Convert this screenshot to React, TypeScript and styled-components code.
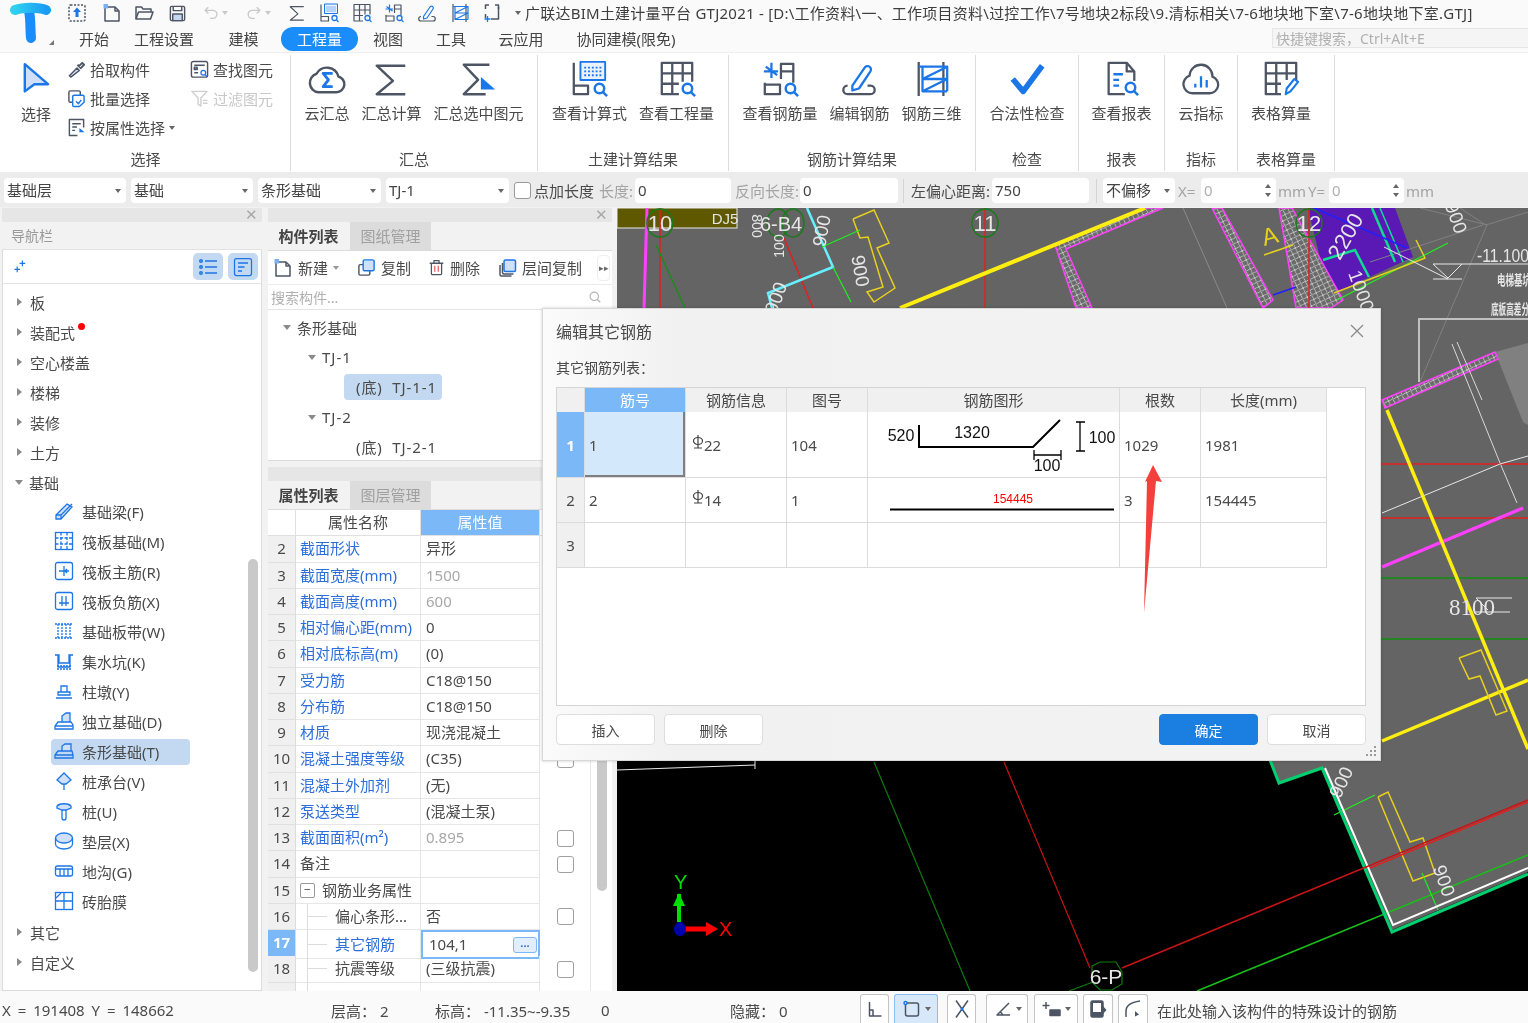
import React from "react";
import styled, { createGlobalStyle } from "styled-components";

const BLUE = "#1b76e8";
const DARK = "#4d5564";
const FONT = `"Noto Sans", "Noto Sans CJK SC", "Liberation Sans", sans-serif`;

const Global = createGlobalStyle`
  html, body { margin: 0; padding: 0; background: #f2f2f2; }
  body { font-family: ${FONT}; color: #4a4a4a; font-size: 15px; overflow: hidden; }
  * { box-sizing: border-box; }
`;

const Page = styled.div`
  position: relative;
  width: 1528px;
  height: 1023px;
  display: flex;
  flex-direction: column;
  overflow: hidden;
  background: #f2f2f2;
  filter: blur(0.4px);
`;

/* ---------- icons ---------- */

const Svg = styled.svg<{ $s: number }>`
  width: ${(p) => p.$s}px;
  height: ${(p) => p.$s}px;
  flex: none;
  display: block;
`;

const lens = (x = 30, y = 30, r = 5) => (
  <g stroke={BLUE} strokeWidth="2.6">
    <circle cx={x} cy={y} r={r} />
    <path d={`M${x + r - 1} ${y + r - 1}l4 4`} />
  </g>
);

const BIG: Record<string, React.ReactNode> = {
  upload: (
    <>
      <rect x="4" y="4" width="32" height="32" rx="3" strokeDasharray="4 3" />
      <path d="M20 9l8 9h-5v10h-6V18h-5z" fill={BLUE} stroke="none" />
    </>
  ),
  fileNew: (
    <>
      <path d="M8 8h18l8 8v20H6V10" />
      <path d="M26 8v8h8" />
      <rect x="3" y="2" width="9" height="9" fill="#7ab0f5" stroke="none" />
    </>
  ),
  open: (
    <>
      <path d="M4 32V8h11l3 4h16v6" />
      <path d="M4 32l5-14h29l-5 14z" />
    </>
  ),
  save: (
    <>
      <path d="M5 8a3 3 0 0 1 3-3h24a3 3 0 0 1 3 3v24a3 3 0 0 1-3 3H8a3 3 0 0 1-3-3z" />
      <path d="M11 5v9h18V5" />
      <rect x="10" y="21" width="20" height="14" fill="#c6d8f2" stroke={DARK} />
    </>
  ),
  undo: (
    <g stroke="#c9c9c9">
      <path d="M8 14h16a9 9 0 0 1 0 18h-6" />
      <path d="M14 7l-7 7 7 7" />
    </g>
  ),
  redo: (
    <g stroke="#c9c9c9">
      <path d="M32 14H16a9 9 0 0 0 0 18h6" />
      <path d="M26 7l7 7-7 7" />
    </g>
  ),
  select: <path d="M6 4l29 25H18L6 38z" fill="#cfe0f8" stroke={BLUE} strokeWidth="3" />,
  cloudSigma: (
    <>
      <path d="M11 34h19a8.5 8.5 0 0 0 2-16.7A12.5 12.5 0 0 0 9 14.5 10 10 0 0 0 11 34z" strokeWidth="2.6" />
      <path d="M26 14h-10l5.5 7-5.5 7h10" stroke={BLUE} strokeWidth="3" />
    </>
  ),
  sigma: <path d="M35 6H5l17 16L5 36h30" strokeWidth="2.6" />,
  sigmaSel: (
    <>
      <path d="M31 5H4l15 16L4 36h23" strokeWidth="2.6" />
      <path d="M22 18l15 13H22z" fill={BLUE} stroke="none" />
    </>
  ),
  calc: (
    <>
      <path d="M4 3v33h15v-9H4" strokeWidth="2.4" />
      <rect x="11" y="2" width="26" height="19" fill="#eaf2fd" stroke={BLUE} strokeWidth="2" />
      <path d="M15 8h18M15 12h18M15 16h18" stroke={BLUE} strokeWidth="2" strokeDasharray="2 2" />
      {lens(31, 30, 5)}
    </>
  ),
  gridQ: (
    <>
      <path d="M22 36H4V3h32v20M4 14h32M4 25h18M15 3v33M26 3v20" strokeWidth="2.4" />
      {lens(31, 30, 5)}
    </>
  ),
  rebarQ: (
    <>
      <path d="M21 20V4h13v20M21 12h13" strokeWidth="2.4" />
      <path d="M3 12h15M11 3v16M5 7l12 9" stroke={BLUE} strokeWidth="2.4" />
      <path d="M4 24v12h16V26H4" strokeWidth="2.4" />
      {lens(31, 30, 5)}
    </>
  ),
  editBar: (
    <>
      <path d="M8 27c-6 0-6 9 0 9h24c6 0 6-9 0-9h-3" strokeWidth="2.4" />
      <path d="M13 27l13-19a3 3 0 0 1 6 4L20 30l-7 2z" stroke={BLUE} strokeWidth="2.4" />
    </>
  ),
  rebar3d: (
    <>
      <path d="M6 2v36M32 2v36" strokeWidth="2.4" />
      <path d="M6 7h30L10 20h26L10 33h26M10 7v26M36 7v26" stroke={BLUE} strokeWidth="2.4" />
    </>
  ),
  boxPlus: (
    <>
      <path d="M14 4H7v8M26 4h7v8M7 22v8" />
      <path d="M33 8v24H18" />
      <path d="M11 26v12M5 32h12" stroke={BLUE} strokeWidth="2.6" />
    </>
  ),
  check: <path d="M5 20l11 13L36 6" stroke={BLUE} strokeWidth="6" />,
  report: (
    <>
      <path d="M24 36H7V3h19l8 9v10" strokeWidth="2.4" />
      <path d="M26 3v9h8" strokeWidth="2.4" />
      <path d="M12 15h10M12 21h6M12 27h6" stroke={BLUE} strokeWidth="2.4" />
      {lens(30, 29, 5)}
    </>
  ),
  cloudIdx: (
    <>
      <path d="M11 35h18a9 9 0 0 0 3-17.5 12 12 0 0 0-24-1A9.5 9.5 0 0 0 11 35z" strokeWidth="2.4" />
      <path d="M14 25v4M20 17v12M26 21v8" stroke={BLUE} strokeWidth="2.4" />
    </>
  ),
  gridPen: (
    <>
      <path d="M20 36H4V3h32v18M4 14h32M4 25h16M15 3v33M26 3v18" strokeWidth="2.4" />
      <path d="M25 36l1-6 8-10 4 3-8 10z" stroke={BLUE} strokeWidth="2.2" />
    </>
  ),
  pick: (
    <>
      <path d="M8 36l-3-3 16-16 5 5z" fill="#cfe0f8" />
      <path d="M22 10l8 8M24 14l8-8 4 4-8 8" strokeWidth="4" />
    </>
  ),
  batch: (
    <>
      <rect x="4" y="4" width="24" height="24" rx="3" />
      <path d="M15 13h18a3 3 0 0 1 3 3v12l-10 9H15a3 3 0 0 1-3-3V16a3 3 0 0 1 3-3z" fill="#fff" stroke={BLUE} />
      <path d="M19 26l5 5 6-8" stroke={BLUE} />
    </>
  ),
  byProp: (
    <>
      <path d="M22 37H5V3h30v17" />
      <path d="M11 12h18M11 19h10M11 26h6" />
      <path d="M26 21l11 9H26z" fill={BLUE} stroke="none" />
    </>
  ),
  find: (
    <>
      <rect x="3" y="3" width="34" height="33" rx="4" />
      <path d="M9 11h22M9 19h8M9 27h8" />
      <rect x="9" y="15" width="6" height="5" />
      {lens(28, 27, 5)}
    </>
  ),
  filter: (
    <g stroke="#cfcfcf">
      <path d="M4 5h32L23 19v17l-6-4V19z" />
      <path d="M27 24h10M27 30h10" />
    </g>
  ),
  copy: (
    <>
      <path d="M13 14H7a3 3 0 0 0-3 3v16a3 3 0 0 0 3 3h17a3 3 0 0 0 3-3v-6" />
      <rect x="13" y="4" width="23" height="23" rx="3" fill="#cfe0f8" stroke={BLUE} />
    </>
  ),
  layerCopy: (
    <>
      <path d="M6 14v19a3 3 0 0 0 3 3h20M11 10v19a3 3 0 0 0 3 3h19" />
      <rect x="14" y="4" width="23" height="23" rx="3" fill="#cfe0f8" stroke={BLUE} />
    </>
  ),
  trash: (
    <>
      <path d="M8 11v23a3 3 0 0 0 3 3h18a3 3 0 0 0 3-3V11M4 10h32M14 10V4h12v6" />
      <path d="M16 16v14M24 16v14" stroke="#e23b3b" strokeWidth="2.4" />
    </>
  ),
  sparkle: (
    <g stroke={BLUE}>
      <path d="M26 4v14M19 11h14M13 19v14M6 26h14" strokeWidth="3" />
    </g>
  ),
  listA: (
    <g stroke={BLUE}>
      <circle cx="6" cy="8" r="2.5" />
      <circle cx="6" cy="20" r="2.5" />
      <circle cx="6" cy="32" r="2.5" />
      <path d="M14 8h24M14 20h24M14 32h24" />
    </g>
  ),
  listB: (
    <g stroke={BLUE}>
      <rect x="3" y="3" width="34" height="34" rx="4" strokeWidth="2.5" />
      <path d="M10 12h20M10 20h13M10 28h8" />
    </g>
  ),
  search: (
    <g stroke="#b4b4b4" strokeWidth="3.5">
      <circle cx="18" cy="18" r="12" />
      <path d="M27 27l8 8" />
    </g>
  ),
  ortho: <path d="M9 6v28h24M9 34V22h7v12" />,
  rectSnap: (
    <>
      <rect x="7" y="8" width="26" height="26" rx="4" />
      <circle cx="7" cy="8" r="3" fill="#fff" stroke={BLUE} />
    </>
  ),
  cross: (
    <>
      <path d="M8 3l24 34M32 3L8 37" />
      <circle cx="20" cy="20" r="3" fill={BLUE} stroke="none" />
    </>
  ),
  angle: <path d="M32 8L8 32h26M14 25l6 7" />,
  plusBar: (
    <>
      <path d="M8 6v14M1 13h14" />
      <rect x="16" y="22" width="20" height="11" fill={DARK} />
    </>
  ),
  device: (
    <>
      <rect x="6" y="4" width="24" height="32" rx="3" fill={DARK} />
      <rect x="10" y="8" width="16" height="18" fill="#fff" stroke="none" />
      <path d="M30 14l7 8-7 8z" fill={DARK} stroke="none" />
    </>
  ),
  curve: (
    <>
      <path d="M6 36V24C6 14 14 7 34 4" />
      <path d="M24 24l8 7-8 4z" fill={DARK} stroke="none" />
    </>
  ),
};

const NAV: Record<string, React.ReactNode> = {
  beam: (
    <>
      <path d="M2 14l11-11 5 3-11 12H2z" fill="#cfe0f8" />
      <path d="M2 14h5v4M7 14L18 3" />
    </>
  ),
  raft: (
    <>
      <rect x="1.5" y="1.5" width="17" height="17" />
      <path d="M1.5 7h17M1.5 13h17M7 1.5v17M13 1.5v17" strokeDasharray="3 1.5" />
    </>
  ),
  main: (
    <>
      <rect x="1.5" y="1.5" width="17" height="17" rx="2" />
      <path d="M5 10h10M10 5v10M13 8l-2 2 2 2" />
    </>
  ),
  neg: (
    <>
      <rect x="1.5" y="1.5" width="17" height="17" rx="2" />
      <path d="M8 5v10M12 5v10M5 12h10" />
    </>
  ),
  band: <path d="M1 3h18M1 17h18M4 3v14M8 3v14M12 3v14M16 3v14" strokeDasharray="2 1" />,
  pit: (
    <>
      <path d="M1 4h4v8h10V4h4M4 4v12h12V4" />
      <path d="M3 15h14M3 18h14" strokeDasharray="2 1" />
    </>
  ),
  pier: <path d="M7 11V5h6v6M4 11h12v3H4zM2 17h16" />,
  indep: (
    <>
      <path d="M8 11V5l4-3h4v9" fill="#cfe0f8" />
      <path d="M4 11h13l2 3v4H1v-3zM1 15h18" />
    </>
  ),
  strip: (
    <>
      <path d="M8 10V5l3-2h6v7" fill="#cfe0f8" />
      <path d="M4 10h14l1 4v3H1v-3zM1 14h18" />
    </>
  ),
  cap: (
    <>
      <path d="M10 2l7 7-5 4h-4L3 9z" fill="#cfe0f8" />
      <path d="M10 13v6" />
    </>
  ),
  pile: (
    <>
      <path d="M3 5c3-3 11-3 14 0v2l-5 2H8L3 7z" fill="#cfe0f8" />
      <path d="M8 9v8a2 2 0 0 0 4 0V9" />
    </>
  ),
  cushion: (
    <>
      <ellipse cx="10" cy="7" rx="8.5" ry="5" fill="#cfe0f8" />
      <path d="M1.5 7v6c0 3 4 5 8.5 5s8.5-2 8.5-5V7" />
    </>
  ),
  ditch: (
    <>
      <rect x="1.5" y="5" width="17" height="10" rx="2" />
      <path d="M2 8h16M6 8v7M10 8v7M14 8v7" />
    </>
  ),
  brick: (
    <>
      <rect x="1.5" y="1.5" width="17" height="17" />
      <path d="M10 1.5v17M1.5 10h17M2 7l5-5" />
    </>
  ),
};

const Icon = ({ n, s = 38 }: { n: string; s?: number }) => (
  <Svg $s={s} viewBox="0 0 40 40" fill="none" stroke={DARK} strokeWidth={s < 26 ? 3 : 2.2} strokeLinejoin="round">
    {BIG[n]}
  </Svg>
);

const NavIcon = ({ n }: { n: string }) => (
  <Svg $s={20} viewBox="0 0 20 20" fill="none" stroke={BLUE} strokeWidth={1.3}>
    {NAV[n]}
  </Svg>
);

/* ---------- title + tabs ---------- */

const TopBar = styled.header`
  height: 52px;
  flex: none;
  display: flex;
  background: #fafafa;
`;

const LogoBox = styled.div`
  position: relative;
  width: 66px;
  padding: 2px 0 0 9px;
`;

const Corner = styled.span`
  position: absolute;
  left: 49px;
  top: 40px;
  border-left: 5px solid transparent;
  border-bottom: 5px solid #777;
`;

const TopRows = styled.div`
  flex: 1;
  min-width: 0;
  display: flex;
  flex-direction: column;
`;

const QuickRow = styled.div`
  height: 26px;
  display: flex;
  align-items: center;
  padding-left: 1px;
`;

const QuickBtn = styled.span<{ $w: number }>`
  width: ${(p) => p.$w}px;
  display: flex;
  align-items: center;
  gap: 2px;
  flex: none;
`;

const TinyCaret = styled.i<{ $c?: string }>`
  display: inline-block;
  flex: none;
  border-left: 3px solid transparent;
  border-right: 3px solid transparent;
  border-top: 4px solid ${(p) => p.$c ?? "#666"};
`;

const Title = styled.div`
  margin-left: 4px;
  font-size: 15px;
  line-height: 26px;
  white-space: nowrap;
  color: #3e3e3e;
  letter-spacing: 0.24px;
`;

const TabRow = styled.nav`
  height: 26px;
  display: flex;
  align-items: center;
`;

const Tab = styled.span<{ $w: number; $on?: boolean }>`
  width: ${(p) => p.$w}px;
  height: 24px;
  flex: none;
  text-align: center;
  line-height: 24px;
  font-size: 15px;
  border-radius: 12px;
  color: ${(p) => (p.$on ? "#fff" : "#444")};
  background: ${(p) => (p.$on ? "#1a8dfa" : "transparent")};
`;

const ShortcutBox = styled.div`
  margin: 0 0 2px auto;
  width: 256px;
  height: 20px;
  padding-left: 3px;
  font-size: 14px;
  line-height: 19px;
  color: #b0b0b0;
  background: #f5f5f5;
  border: 1px solid #e6e6e6;
  border-right: none;
`;

/* ---------- ribbon ---------- */

const Ribbon = styled.section`
  height: 120px;
  flex: none;
  display: flex;
  padding: 2px 0 0 1px;
  background: #fff;
  border-top: 1px solid #efefef;
`;

const Group = styled.div<{ $w: number }>`
  width: ${(p) => p.$w}px;
  height: 116px;
  flex: none;
  display: flex;
  flex-direction: column;
  border-right: 1px solid #dcdcdc;
`;

const GroupBody = styled.div<{ $pr?: number }>`
  flex: 1;
  display: flex;
  justify-content: center;
  gap: 12px;
  padding: 5px ${(p) => p.$pr ?? 0}px 0 0;
`;

const GroupLabel = styled.div`
  height: 22px;
  text-align: center;
  line-height: 20px;
  font-size: 15px;
`;

const Tool = styled.div`
  display: flex;
  flex-direction: column;
  align-items: center;
  gap: 5px;
  line-height: 20px;
  font-size: 15px;
  white-space: nowrap;
`;

const SelectBody = styled(GroupBody)`
  justify-content: flex-start;
  padding: 0 0 0 19px;
  gap: 0;
`;

const SelectTool = styled(Tool)`
  padding-top: 6px;
  gap: 11px;
`;

const SmallCol = styled.div<{ $w: number; $ml?: number }>`
  width: ${(p) => p.$w}px;
  margin-left: ${(p) => p.$ml ?? 0}px;
  display: flex;
  flex-direction: column;
`;

const SmallTool = styled.div<{ $off?: boolean }>`
  height: 29px;
  display: flex;
  align-items: center;
  gap: 4px;
  font-size: 15px;
  white-space: nowrap;
  color: ${(p) => (p.$off ? "#c8c8c8" : "#4a4a4a")};
`;

/* ---------- options bar ---------- */

const Options = styled.section`
  height: 35px;
  flex: none;
  display: flex;
  align-items: center;
  padding: 2px 0 0 4px;
  background: #ececec;
  font-size: 15px;
`;

const Field = styled.div<{ $w: number; $ml?: number }>`
  width: ${(p) => p.$w}px;
  margin-left: ${(p) => p.$ml ?? 0}px;
  height: 25px;
  flex: none;
  display: flex;
  align-items: center;
  justify-content: space-between;
  padding: 0 5px 0 3px;
  background: #fff;
  border-radius: 4px;
  line-height: 25px;
  white-space: nowrap;
  overflow: hidden;
  color: #444;
`;

const GreyNum = styled.span`
  color: #b0b0b0;
`;

const OptLabel = styled.span<{ $w: number; $ml?: number; $grey?: boolean }>`
  width: ${(p) => p.$w}px;
  margin-left: ${(p) => p.$ml ?? 0}px;
  flex: none;
  white-space: nowrap;
  color: ${(p) => (p.$grey ? "#a4a4a4" : "#4a4a4a")};
`;

const CheckBox = styled.span<{ $ml?: number }>`
  width: 17px;
  height: 17px;
  margin-left: ${(p) => p.$ml ?? 0}px;
  flex: none;
  display: block;
  background: #fff;
  border: 1.5px solid #9a9a9a;
  border-radius: 3px;
`;

const Divider = styled.span<{ $ml: number }>`
  width: 1px;
  height: 24px;
  margin-left: ${(p) => p.$ml}px;
  flex: none;
  background: #d4d4d4;
`;

const SpinArrows = styled.span`
  display: flex;
  flex-direction: column;
  gap: 5px;
`;

const UpCaret = styled(TinyCaret)`
  transform: rotate(180deg);
`;

/* ---------- main area ---------- */

const Main = styled.main`
  flex: 1;
  min-height: 0;
  display: flex;
  padding: 1px 0 0 2px;
`;

const Panel = styled.div<{ $w: number; $mr?: number }>`
  width: ${(p) => p.$w}px;
  margin-right: ${(p) => p.$mr ?? 0}px;
  flex: none;
  display: flex;
  flex-direction: column;
  min-height: 0;
`;

const Strip = styled.div`
  height: 14px;
  flex: none;
  position: relative;
  background: #e6e6e6;
`;

const StripClose = styled.span`
  position: absolute;
  right: 4px;
  top: -1px;
  font-size: 15px;
  line-height: 15px;
  color: #a8a8a8;
`;

const NavTitle = styled.div`
  height: 28px;
  flex: none;
  padding-left: 9px;
  line-height: 27px;
  font-size: 14px;
  color: #9a9a9a;
  background: #f2f2f2;
  border-bottom: 1px solid #e2e2e2;
`;

const NavBody = styled.div`
  position: relative;
  flex: 1;
  min-height: 0;
  background: #fff;
  border: 1px solid #dcdcdc;
  border-top: none;
`;

const NavTools = styled.div`
  height: 34px;
  display: flex;
  align-items: center;
  padding: 0 3px 0 9px;
  gap: 5px;
  border-bottom: 1px solid #e4e4e4;
`;

const ToolChip = styled.span`
  width: 30px;
  height: 27px;
  display: flex;
  align-items: center;
  justify-content: center;
  background: #c2d9f1;
  border-radius: 5px;
`;

const SpreadAuto = styled.span`
  margin-right: auto;
`;

const TreeList = styled.div`
  padding-top: 3px;
`;

const TreeRow = styled.div<{ $pl?: number }>`
  position: relative;
  height: 30px;
  display: flex;
  align-items: center;
  padding-left: ${(p) => p.$pl ?? 14}px;
  font-size: 15px;
  white-space: nowrap;
`;

const Arrow = styled.i<{ $open?: boolean }>`
  display: block;
  flex: none;
  margin-right: 8px;
  width: 0;
  height: 0;
  ${(p) =>
    p.$open
      ? `border-left:4.5px solid transparent;border-right:4.5px solid transparent;border-top:5px solid #8a8a8a;margin-left:-2px;margin-right:6px;`
      : `border-top:4.5px solid transparent;border-bottom:4.5px solid transparent;border-left:5px solid #8a8a8a;`}
`;

const RedDot = styled.b`
  position: absolute;
  left: 75px;
  top: 6px;
  width: 7px;
  height: 7px;
  border-radius: 50%;
  background: #f00;
`;

const LeafBox = styled.div<{ $on?: boolean }>`
  height: 26px;
  width: 139px;
  margin-left: 34px;
  padding: 0 0 2px 3px;
  display: flex;
  align-items: center;
  gap: 8px;
  border-radius: 4px;
  background: ${(p) => (p.$on ? "#c2d9f1" : "transparent")};
`;

const ScrollThumb = styled.span<{ $top: number; $h: number; $x: number }>`
  position: absolute;
  right: ${(p) => p.$x}px;
  top: ${(p) => p.$top}px;
  width: 10px;
  height: ${(p) => p.$h}px;
  border-radius: 5px;
  background: #c9c9c9;
`;

const PanelTabs = styled.div`
  height: 29px;
  flex: none;
  display: flex;
  background: #f2f2f2;
  border-bottom: 1px solid #dcdcdc;
`;

const PanelTab = styled.span<{ $on?: boolean }>`
  width: 81px;
  margin-right: 1px;
  text-align: center;
  line-height: 28px;
  font-size: 15px;
  font-weight: ${(p) => (p.$on ? 700 : 400)};
  color: ${(p) => (p.$on ? "#444" : "#a0a0a0")};
  background: ${(p) => (p.$on ? "#f2f2f2" : "#dcdcdc")};
`;

const ListBar = styled.div`
  height: 34px;
  flex: none;
  display: flex;
  align-items: center;
  padding-left: 5px;
  background: #fff;
  border-bottom: 1px solid #ebebeb;
`;

const BarBtn = styled.span<{ $w: number }>`
  width: ${(p) => p.$w}px;
  flex: none;
  display: flex;
  align-items: center;
  gap: 5px;
  font-size: 15px;
  white-space: nowrap;
`;

const More = styled.span`
  margin-left: auto;
  margin-right: 2px;
  width: 13px;
  height: 26px;
  border: 1px solid #eee;
  border-radius: 4px;
  font-size: 9px;
  line-height: 24px;
  text-align: center;
  color: #666;
`;

const SearchRow = styled.div`
  height: 25px;
  flex: none;
  display: flex;
  align-items: center;
  justify-content: space-between;
  padding: 0 10px 0 3px;
  background: #fff;
  font-size: 14px;
  color: #b0b0b0;
  border-bottom: 1px solid #e4e4e4;
`;

const ListTree = styled.div`
  height: 151px;
  flex: none;
  padding-top: 2px;
  background: #fff;
  border-bottom: 1px solid #dcdcdc;
`;

const ComponentRow = styled.div<{ $pl: number }>`
  height: 30px;
  display: flex;
  align-items: center;
  padding-left: ${(p) => p.$pl}px;
  font-size: 15px;
`;

const WideCode = styled.span`
  letter-spacing: 1px;
`;

const PickedChip = styled.span<{ $on?: boolean }>`
  height: 26px;
  padding: 0 5px 0 12px;
  line-height: 26px;
  border-radius: 4px;
  letter-spacing: 0.9px;
  background: ${(p) => (p.$on ? "#c2d9f1" : "transparent")};
`;

const Gap = styled.div`
  height: 6px;
  flex: none;
`;

const PropBody = styled.div`
  position: relative;
  flex: 1;
  min-height: 0;
  overflow: hidden;
  background: #fff;
`;

const PropRow = styled.div<{ $h?: number }>`
  height: ${(p) => p.$h ?? 26.25}px;
  display: grid;
  grid-template-columns: 28px 125px 119px 51px;
  font-size: 15px;
  line-height: 25px;
`;

const Cell = styled.div<{ $c?: string; $pad?: number }>`
  display: flex;
  align-items: center;
  min-width: 0;
  padding-left: ${(p) => p.$pad ?? 4}px;
  white-space: nowrap;
  overflow: hidden;
  color: ${(p) => p.$c ?? "#4a4a4a"};
  border-right: 1px solid #e6e6e6;
  border-bottom: 1px solid #e6e6e6;
`;

const NumCell = styled.div<{ $sel?: boolean }>`
  text-align: center;
  background: ${(p) => (p.$sel ? "#7ab8f8" : "#f0f0f0")};
  color: ${(p) => (p.$sel ? "#fff" : "#4a4a4a")};
  font-weight: ${(p) => (p.$sel ? 700 : 400)};
  border-right: 1px solid #dcdcdc;
  border-bottom: 1px solid #e0e0e0;
`;

const HeadCell = styled.div<{ $on?: boolean }>`
  text-align: center;
  color: ${(p) => (p.$on ? "#fff" : "#4a4a4a")};
  background: ${(p) => (p.$on ? "#7ab8f8" : "#fff")};
  border-right: 1px solid #e0e0e0;
  border-bottom: 1px solid #e0e0e0;
`;

const CheckCell = styled.div`
  display: flex;
  align-items: center;
  justify-content: center;
  padding-left: 1px;
  border-right: 1px solid #e6e6e6;
`;

const Square = styled.span`
  width: 17px;
  height: 17px;
  background: #fff;
  border: 1.5px solid #a0a0a0;
  border-radius: 3px;
`;

const Collapse = styled.span`
  width: 15px;
  height: 15px;
  margin-right: 7px;
  flex: none;
  border: 1px solid #999;
  border-radius: 2px;
  text-align: center;
  font-size: 12px;
  line-height: 12px;
  color: #555;
`;

const Branch = styled.span`
  position: relative;
  width: 20px;
  height: 1px;
  margin: 0 8px 0 11px;
  flex: none;
  background: #dcdcdc;

  &::before {
    content: "";
    position: absolute;
    left: 0;
    top: -14px;
    width: 1px;
    height: 28px;
    background: #dcdcdc;
  }
`;

const EditBox = styled.div`
  grid-column: 3;
  display: flex;
  align-items: center;
  justify-content: space-between;
  padding: 0 1px 0 6px;
  background: #fff;
  border: 2px solid #7ab8f8;
  color: #4a4a4a;
`;

const EllipsisBtn = styled.span`
  width: 24px;
  height: 16px;
  border: 1px solid #7ab8f8;
  border-radius: 3px;
  background: #e2eefc;
  color: #2a6fd8;
  font-size: 11px;
  font-weight: 700;
  line-height: 10px;
  text-align: center;
`;

/* ---------- canvas ---------- */

const Canvas = styled.div`
  flex: 1;
  margin-left: 5px;
  background: #000;
  overflow: hidden;
`;

const CadSvg = styled.svg`
  display: block;
  width: 911px;
  height: 783px;
`;

type Seg = [string, string, number];
const SEGS: Seg[] = [
  ["647,208 644,308", "#ff40ff", 3],
  ["660,208 660,308", "#e02020", 1.5],
  ["656,245 685,308", "#1e8a1e", 1.5],
  ["784,238 813,308", "#e02020", 1.5],
  ["985,208 985,308", "#e02020", 1.5],
  ["1309,208 1309,308", "#e02020", 1.5],
  ["1183,208 1227,308", "#8a8a8a", 1],
  ["1420,208 1487,225 1420,382", "#808080", 1],
  ["1370,262 1483,225", "#808080", 1],
  ["1460,208 1486,225 1528,212", "#808080", 1],
  ["853,219 874,210 889,243 877,248 895,288 874,302 867,292 883,287 868,237 860,238 853,219", "#e6cf1e", 1.5],
  ["807,208 833,267 768,293 772,308", "#66f0ff", 2.5],
  ["822,247 860,230", "#20ee20", 1.2],
  ["833,267 851,302", "#20ee20", 1.2],
  ["900,308 1145,208", "#ffee10", 4],
  ["1264,255 1293,245", "#e6cf1e", 1.5],
  ["1337,300 1448,243", "#20ee20", 1.2],
  ["1416,240 1425,258 1334,293", "#e6cf1e", 1.5],
  ["1323,260 1355,250 1369,277", "#10dc90", 2.5],
  ["1372,208 1395,262", "#10dc90", 2.5],
  ["1380,208 1403,262", "#10dc90", 1.5],
  ["1314,208 1407,248", "#2020ff", 1.5],
  ["1273,295 1296,287", "#2020ff", 1.5],
  ["1384,247 1448,279", "#e8e8e8", 1],
  ["1433,264 1528,264", "#e8e8e8", 1],
  ["1433,264 1448,278 1462,264", "#e8e8e8", 1],
  ["1433,279 1462,279", "#e8e8e8", 1],
  ["1419,382 1419,319 1528,319", "#c0c0c0", 2],
  ["1452,344 1500,463 1517,503", "#d8d8d8", 1],
  ["1457,342 1482,400", "#d8d8d8", 1],
  ["1380,464 1528,464", "#e02020", 1.5],
  ["1380,518 1528,518", "#e02020", 1.5],
  ["1380,578 1528,578", "#0f8f0f", 1.5],
  ["1380,639 1528,639", "#0f8f0f", 1.5],
  ["1382,513 1500,464 1528,456", "#e8e8e8", 1],
  ["1382,567 1523,508", "#ff40ff", 3.5],
  ["1387,410 1528,749", "#ffee10", 3.5],
  ["1382,741 1528,680", "#ffee10", 3.5],
  ["1459,658 1481,650 1507,711 1496,715 1480,676 1469,679 1459,658", "#e6cf1e", 1.5],
  ["1378,797 1388,792 1410,842 1423,838 1435,873 1413,881 1378,797", "#e6cf1e", 1.5],
  ["1370,868 1528,802", "#e02020", 1.5],
  ["1197,991 1528,855", "#18c018", 1.5],
  ["1422,873 1438,910", "#20ee20", 1.2],
  ["1334,815 1375,795", "#20ee20", 1.2],
  ["1270,760 1279,783 1322,768 1392,932 1528,874", "#00d070", 3],
  ["1325,768 1393,925 1528,868", "#fff", 2],
  ["874,762 970,991", "#0f7a0f", 1.2],
  ["1004,762 1090,968", "#c81414", 1.2],
  ["1122,968 1528,800", "#c81414", 1.5],
  ["1069,991 1093,982", "#0f7a0f", 1.2],
  ["617,770 755,765", "#e8e8e8", 1],
  ["755,761 755,769", "#e8e8e8", 1],
];

const CadLabel = styled.text<{ $s?: number; $c?: string; $bold?: boolean }>`
  font-family: "Liberation Sans", "Noto Sans CJK SC", sans-serif;
  font-size: ${(p) => p.$s ?? 15}px;
  font-weight: ${(p) => (p.$bold ? 700 : 400)};
  fill: ${(p) => p.$c ?? "#e6e6e6"};
  text-anchor: middle;
`;

const SerifLabel = styled(CadLabel)`
  font-family: "Liberation Serif", serif;
`;

const AxisRing = ({ x, rx = 13 }: { x: number; rx?: number }) => (
  <ellipse cx={x} cy={223} rx={rx} ry={14} fill="none" stroke="#1a7a1a" strokeWidth={1.5} />
);

const Axis = ({ x, label }: { x: number; label: string }) => (
  <>
    <AxisRing x={x} />
    <CadLabel x={x} y={231} $s={22}>{label}</CadLabel>
  </>
);

const Turned = ({ x, y, a, t, s = 19, c }: { x: number; y: number; a: number; t: string; s?: number; c?: string }) => (
  <CadLabel x={0} y={0} $s={s} $c={c} transform={`translate(${x} ${y}) rotate(${a})`}>{t}</CadLabel>
);

const CadDrawing = () => (
  <CadSvg viewBox="617 208 911 783">
    <defs>
      <pattern id="hatch" width="7" height="7" patternUnits="userSpaceOnUse" patternTransform="rotate(20)">
        <rect width="7" height="7" fill="#6a6a6a" />
        <path d="M0 0l7 7M7 0L0 7" stroke="#c4c4c4" strokeWidth="1" />
      </pattern>
    </defs>
    <polygon points="617,208 1528,208 1528,872 1392,930 1322,768 1279,783 1270,760 1000,500 617,500" fill="#646464" />
    <rect x="617" y="208" width="120" height="20" fill="#5f5800" stroke="#e8e8e8" strokeWidth="1" />
    <polygon points="1308,208 1395,208 1413,257 1337,292 1320,258" fill="#5a18b4" />
    <polygon points="1495,352 1528,343 1528,425 1523,422" fill="#808080" />
    <polygon points="1055,245 1145,208 1163,208 1066,249 1092,308 1076,308" fill="url(#hatch)" stroke="#ff40ff" strokeWidth="1.5" />
    <polygon points="1212,208 1222,208 1273,300 1263,308" fill="url(#hatch)" stroke="#ff40ff" strokeWidth="1.5" />
    <polygon points="1279,208 1292,208 1343,300 1331,308 1296,308" fill="url(#hatch)" stroke="#ff40ff" strokeWidth="1.5" />
    <polygon points="1382,400 1495,352 1498,359 1385,408" fill="url(#hatch)" stroke="#ff40ff" strokeWidth="1.5" />
    {SEGS.map(([points, color, w]) => (
      <polyline key={points} points={points} fill="none" stroke={color} strokeWidth={w} />
    ))}
    <Axis x={660} label="10" />
    <AxisRing x={778} rx={11} />
    <AxisRing x={793} rx={11} />
    <CadLabel x={781} y={231} $s={20}>6-B4</CadLabel>
    <Axis x={985} label="11" />
    <Axis x={1309} label="12" />
    <Turned x={725} y={224} a={0} t="DJ5" s={15} />
    <Turned x={752} y={226} a={90} t="800" s={14} />
    <Turned x={784} y={246} a={-90} t="100" s={14} />
    <Turned x={828} y={232} a={-80} t="900" />
    <Turned x={854} y={272} a={80} t="900" />
    <Turned x={782} y={300} a={-70} t="900" />
    <Turned x={1352} y={240} a={-60} t="2200" s={22} />
    <Turned x={1357} y={298} a={70} t="10000" />
    <Turned x={1272} y={244} a={-15} t="A" s={24} c="#e6cf1e" />
    <Turned x={1450} y={220} a={70} t="900" />
    <Turned x={1347} y={785} a={-65} t="900" />
    <Turned x={1438} y={883} a={70} t="900" />
    <SerifLabel x={1472} y={615} $s={23}>8100</SerifLabel>
    <path d="M1476 598h36M1476 598l12 12M1474 612h36" stroke="#e8e8e8" strokeWidth="1" fill="none" />
    <CadLabel x={1503} y={262} $s={19} textLength={52} lengthAdjust="spacingAndGlyphs">-11.100</CadLabel>
    <CadLabel x={1514} y={285} $s={14} $bold textLength={34} lengthAdjust="spacingAndGlyphs">电梯基坑</CadLabel>
    <CadLabel x={1510} y={314} $s={14} $bold textLength={38} lengthAdjust="spacingAndGlyphs">底板高差分</CadLabel>
    <polygon points="1092,966 1100,962 1116,962 1122,972 1122,984 1112,990 1100,990 1092,982" fill="none" stroke="#0f7a0f" strokeWidth="1.2" />
    <CadLabel x={1106} y={984} $s={21}>6-P</CadLabel>
    <path d="M679 922v-28" stroke="#00e000" strokeWidth="4" />
    <polygon points="679,893 673,906 685,906" fill="#00e000" />
    <text x={674} y={889} fontSize="20" fill="#00e000" fontFamily="Liberation Sans">Y</text>
    <path d="M684 929h24" stroke="#ff0000" strokeWidth="5" />
    <polygon points="718,929 706,922 706,936" fill="#ff0000" />
    <ellipse cx={680} cy={929} rx={6} ry={7} fill="#0000b0" />
    <text x={719} y={936} fontSize="20" fill="#ff0000" fontFamily="Liberation Sans">X</text>
  </CadSvg>
);

/* ---------- dialog ---------- */

const Dialog = styled.div`
  position: absolute;
  left: 542px;
  top: 308px;
  width: 839px;
  height: 453px;
  display: flex;
  flex-direction: column;
  padding: 0 14px 0 13px;
  background: linear-gradient(90deg, #fbfbfb, #f1f1f1 16%, #f3f3f3 100%);
  border: 1px solid #d8d8d8;
  box-shadow: 0 0 3px rgba(0, 0, 0, 0.2);
`;

const DialogHead = styled.div`
  height: 48px;
  flex: none;
  display: flex;
  align-items: center;
  justify-content: space-between;
  font-size: 16px;
  padding-bottom: 4px;
`;

const CloseX = styled.svg`
  width: 16px;
  height: 16px;
  margin-right: 1px;
`;

const DialogCaption = styled.div`
  height: 30px;
  flex: none;
  font-size: 14px;
  line-height: 22px;
`;

const DialogTable = styled.div`
  height: 319px;
  flex: none;
  background: #fff;
  border: 1px solid #d4d4d4;
`;

const RebarRow = styled.div<{ $h: number }>`
  height: ${(p) => p.$h}px;
  width: 770px;
  display: grid;
  grid-template-columns: 28px 101px 101px 81px 252px 81px 126px;
  font-size: 15px;
  border-bottom: 1px solid #dcdcdc;
`;

const RebarCell = styled.div<{ $on?: boolean }>`
  display: flex;
  align-items: center;
  padding-left: 4px;
  color: #4a4a4a;
  border-right: 1px solid #dcdcdc;
  background: ${(p) => (p.$on ? "#d4e8fc" : "transparent")};
  ${(p) => (p.$on ? "box-shadow: inset -2px -2px 0 #7f7f7f;" : "")}
`;

const RebarHead = styled.div<{ $on?: boolean }>`
  text-align: center;
  line-height: 24px;
  color: ${(p) => (p.$on ? "#fff" : "#4a4a4a")};
  background: ${(p) => (p.$on ? "#7ab8f8" : "#f0f0f0")};
  border-right: 1px solid #dcdcdc;
`;

const RebarNum = styled.div<{ $on?: boolean }>`
  display: flex;
  align-items: center;
  justify-content: center;
  color: ${(p) => (p.$on ? "#fff" : "#4a4a4a")};
  font-weight: ${(p) => (p.$on ? 700 : 400)};
  background: ${(p) => (p.$on ? "#7ab8f8" : "#f0f0f0")};
  border-right: 1px solid #dcdcdc;
`;

const BarSym = styled.svg`
  width: 12px;
  height: 14px;
  margin: -6px 0 0 2px;
  flex: none;
`;

const ShapeSvg = styled.svg`
  display: block;
`;

const ShapeCell = styled.div`
  border-right: 1px solid #dcdcdc;
  overflow: hidden;
`;

const ShapeText = styled.text<{ $s?: number; $c?: string }>`
  font-family: "Liberation Sans", sans-serif;
  font-size: ${(p) => p.$s ?? 16}px;
  fill: ${(p) => p.$c ?? "#111"};
  text-anchor: middle;
`;

const DialogFoot = styled.div`
  height: 31px;
  margin-top: 8px;
  display: flex;
  gap: 9px;
`;

const DlgButton = styled.button<{ $primary?: boolean }>`
  width: 99px;
  height: 31px;
  padding: 0;
  font-family: ${FONT};
  font-size: 14px;
  border-radius: 4px;
  border: 1px solid ${(p) => (p.$primary ? "#1a7fe0" : "#dedede")};
  background: ${(p) => (p.$primary ? "#1a7fe0" : "#fff")};
  color: ${(p) => (p.$primary ? "#fff" : "#4a4a4a")};
`;

const FootSpacer = styled.span`
  flex: 1;
`;

const Grip = styled.svg`
  position: absolute;
  right: 3px;
  bottom: 3px;
  width: 11px;
  height: 11px;
`;

const ArrowMark = styled.svg`
  position: absolute;
  left: 1135px;
  top: 460px;
  width: 35px;
  height: 160px;
  overflow: visible;
`;

/* ---------- status ---------- */

const Status = styled.footer`
  height: 32px;
  flex: none;
  display: flex;
  align-items: center;
  padding-left: 2px;
  background: #fafafa;
  font-size: 15px;
  white-space: nowrap;
`;

const StatusText = styled.span<{ $w: number; $ml?: number; $wide?: boolean }>`
  width: ${(p) => p.$w}px;
  margin-left: ${(p) => p.$ml ?? 0}px;
  padding-top: 6px;
  flex: none;
  word-spacing: ${(p) => (p.$wide ? 3 : 0)}px;
`;

const SnapBtn = styled.span<{ $w: number; $on?: boolean; $ml: number }>`
  width: ${(p) => p.$w}px;
  height: 29px;
  margin: 3px 0 0 ${(p) => p.$ml}px;
  flex: none;
  display: flex;
  align-items: center;
  justify-content: center;
  gap: 3px;
  border: 1px solid ${(p) => (p.$on ? "#8dbdf0" : "#c4c4c4")};
  border-bottom: none;
  border-radius: 3px 3px 0 0;
  background: ${(p) => (p.$on ? "#d8e8fb" : "#fff")};
`;

/* ---------- data ---------- */

const TOP_TREE = ["板", "装配式", "空心楼盖", "楼梯", "装修", "土方"];
const LEAVES: [string, string][] = [
  ["beam", "基础梁(F)"],
  ["raft", "筏板基础(M)"],
  ["main", "筏板主筋(R)"],
  ["neg", "筏板负筋(X)"],
  ["band", "基础板带(W)"],
  ["pit", "集水坑(K)"],
  ["pier", "柱墩(Y)"],
  ["indep", "独立基础(D)"],
  ["strip", "条形基础(T)"],
  ["cap", "桩承台(V)"],
  ["pile", "桩(U)"],
  ["cushion", "垫层(X)"],
  ["ditch", "地沟(G)"],
  ["brick", "砖胎膜"],
];

const LINK = "#2c6fdc";
const MUTED = "#a8a8a8";
const PROPS: { n: number; name: string; val: string; nc?: string; vc?: string; box?: boolean }[] = [
  { n: 2, name: "截面形状", val: "异形", nc: LINK },
  { n: 3, name: "截面宽度(mm)", val: "1500", nc: LINK, vc: MUTED },
  { n: 4, name: "截面高度(mm)", val: "600", nc: LINK, vc: MUTED },
  { n: 5, name: "相对偏心距(mm)", val: "0", nc: LINK },
  { n: 6, name: "相对底标高(m)", val: "(0)", nc: LINK },
  { n: 7, name: "受力筋", val: "C18@150", nc: LINK },
  { n: 8, name: "分布筋", val: "C18@150", nc: LINK },
  { n: 9, name: "材质", val: "现浇混凝土", nc: LINK },
  { n: 10, name: "混凝土强度等级", val: "(C35)", nc: LINK, box: true },
  { n: 11, name: "混凝土外加剂", val: "(无)", nc: LINK },
  { n: 12, name: "泵送类型", val: "(混凝土泵)", nc: LINK },
  { n: 13, name: "截面面积(m²)", val: "0.895", nc: LINK, vc: MUTED, box: true },
  { n: 14, name: "备注", val: "", box: true },
];

const Rebar = () => (
  <BarSym viewBox="0 0 12 14" fill="none" stroke="#444" strokeWidth="1.2">
    <ellipse cx="6" cy="6" rx="4.5" ry="3.5" />
    <path d="M6 0v13M2 13h8" />
  </BarSym>
);

const Select = ({ w, t, ml }: { w: number; t: string; ml?: number }) => (
  <Field $w={w} $ml={ml}>
    {t}
    <TinyCaret />
  </Field>
);

const Spin = ({ ml }: { ml?: number }) => (
  <Field $w={75} $ml={ml}>
    <GreyNum>0</GreyNum>
    <SpinArrows>
      <UpCaret />
      <TinyCaret />
    </SpinArrows>
  </Field>
);

export default function App() {
  return (
    <Page>
      <Global />
      <TopBar>
        <LogoBox>
          <Svg $s={42} viewBox="0 0 42 42" fill="none">
            <defs>
              <linearGradient id="logoBar" x1="0" y1="0" x2="1" y2="0">
                <stop offset="0" stopColor="#2fd0f0" />
                <stop offset="1" stopColor="#1a9cf5" />
              </linearGradient>
            </defs>
            <path d="M20 9c2 9 1 18 2 27" stroke="#1a8dfa" strokeWidth="10" strokeLinecap="round" />
            <path d="M6 8c8-3 24-3 31 0" stroke="url(#logoBar)" strokeWidth="10" strokeLinecap="round" />
          </Svg>
          <Corner />
        </LogoBox>
        <TopRows>
          <QuickRow>
            <QuickBtn $w={35}><Icon n="upload" s={20} /></QuickBtn>
            <QuickBtn $w={32}><Icon n="fileNew" s={20} /></QuickBtn>
            <QuickBtn $w={34}><Icon n="open" s={20} /></QuickBtn>
            <QuickBtn $w={34}><Icon n="save" s={19} /></QuickBtn>
            <QuickBtn $w={43}><Icon n="undo" s={18} /><TinyCaret $c="#c9c9c9" /></QuickBtn>
            <QuickBtn $w={43}><Icon n="redo" s={18} /><TinyCaret $c="#c9c9c9" /></QuickBtn>
            <QuickBtn $w={31}><Icon n="sigma" s={18} /></QuickBtn>
            <QuickBtn $w={33}><Icon n="calc" s={20} /></QuickBtn>
            <QuickBtn $w={32}><Icon n="gridQ" s={20} /></QuickBtn>
            <QuickBtn $w={33}><Icon n="rebarQ" s={20} /></QuickBtn>
            <QuickBtn $w={33}><Icon n="editBar" s={20} /></QuickBtn>
            <QuickBtn $w={32}><Icon n="rebar3d" s={20} /></QuickBtn>
            <QuickBtn $w={33}><Icon n="boxPlus" s={20} /></QuickBtn>
            <TinyCaret />
            <Title>广联达BIM土建计量平台 GTJ2021 - [D:\工作资料\一、工作项目资料\过控工作\7号地块2标段\9.清标相关\7-6地块地下室\7-6地块地下室.GTJ]</Title>
          </QuickRow>
          <TabRow>
            <Tab $w={56}>开始</Tab>
            <Tab $w={84}>工程设置</Tab>
            <Tab $w={75}>建模</Tab>
            <Tab $w={77} $on>工程量</Tab>
            <Tab $w={60}>视图</Tab>
            <Tab $w={66}>工具</Tab>
            <Tab $w={74}>云应用</Tab>
            <Tab $w={136}>协同建模(限免)</Tab>
            <ShortcutBox>快捷键搜索，Ctrl+Alt+E</ShortcutBox>
          </TabRow>
        </TopRows>
      </TopBar>

      <Ribbon>
        <Group $w={290}>
          <SelectBody>
            <SelectTool>
              <Icon n="select" s={32} />
              选择
            </SelectTool>
            <SmallCol $w={123} $ml={15}>
              <SmallTool><Icon n="pick" s={19} />拾取构件</SmallTool>
              <SmallTool><Icon n="batch" s={19} />批量选择</SmallTool>
              <SmallTool><Icon n="byProp" s={19} />按属性选择 <TinyCaret /></SmallTool>
            </SmallCol>
            <SmallCol $w={90}>
              <SmallTool><Icon n="find" s={19} />查找图元</SmallTool>
              <SmallTool $off><Icon n="filter" s={19} />过滤图元</SmallTool>
            </SmallCol>
          </SelectBody>
          <GroupLabel>选择</GroupLabel>
        </Group>
        <Group $w={247}>
          <GroupBody>
            <Tool><Icon n="cloudSigma" />云汇总</Tool>
            <Tool><Icon n="sigma" />汇总计算</Tool>
            <Tool><Icon n="sigmaSel" />汇总选中图元</Tool>
          </GroupBody>
          <GroupLabel>汇总</GroupLabel>
        </Group>
        <Group $w={191}>
          <GroupBody>
            <Tool><Icon n="calc" />查看计算式</Tool>
            <Tool><Icon n="gridQ" />查看工程量</Tool>
          </GroupBody>
          <GroupLabel>土建计算结果</GroupLabel>
        </Group>
        <Group $w={247}>
          <GroupBody>
            <Tool><Icon n="rebarQ" />查看钢筋量</Tool>
            <Tool><Icon n="editBar" />编辑钢筋</Tool>
            <Tool><Icon n="rebar3d" />钢筋三维</Tool>
          </GroupBody>
          <GroupLabel>钢筋计算结果</GroupLabel>
        </Group>
        <Group $w={103}>
          <GroupBody>
            <Tool><Icon n="check" />合法性检查</Tool>
          </GroupBody>
          <GroupLabel>检查</GroupLabel>
        </Group>
        <Group $w={86}>
          <GroupBody>
            <Tool><Icon n="report" />查看报表</Tool>
          </GroupBody>
          <GroupLabel>报表</GroupLabel>
        </Group>
        <Group $w={73}>
          <GroupBody>
            <Tool><Icon n="cloudIdx" />云指标</Tool>
          </GroupBody>
          <GroupLabel>指标</GroupLabel>
        </Group>
        <Group $w={97}>
          <GroupBody $pr={10}>
            <Tool><Icon n="gridPen" />表格算量</Tool>
          </GroupBody>
          <GroupLabel>表格算量</GroupLabel>
        </Group>
      </Ribbon>

      <Options>
        <Select w={122} t="基础层" />
        <Select w={122} t="基础" ml={5} />
        <Select w={123} t="条形基础" ml={5} />
        <Select w={123} t="TJ-1" ml={5} />
        <CheckBox $ml={5} />
        <OptLabel $w={61} $ml={3}>点加长度</OptLabel>
        <OptLabel $w={36} $ml={4} $grey>长度:</OptLabel>
        <Field $w={96}>0</Field>
        <OptLabel $w={65} $ml={4} $grey>反向长度:</OptLabel>
        <Field $w={98}>0</Field>
        <Divider $ml={5} />
        <OptLabel $w={81} $ml={7}>左偏心距离:</OptLabel>
        <Field $w={97}>750</Field>
        <Divider $ml={7} />
        <Select w={72} t="不偏移" ml={6} />
        <OptLabel $w={23} $ml={3} $grey>X=</OptLabel>
        <Spin />
        <OptLabel $w={30} $ml={2} $grey>mm</OptLabel>
        <OptLabel $w={21} $grey>Y=</OptLabel>
        <Spin />
        <OptLabel $w={30} $ml={2} $grey>mm</OptLabel>
      </Options>

      <Main>
        <Panel $w={260} $mr={6}>
          <Strip><StripClose>✕</StripClose></Strip>
          <NavTitle>导航栏</NavTitle>
          <NavBody>
            <NavTools>
              <SpreadAuto><Icon n="sparkle" s={16} /></SpreadAuto>
              <ToolChip><Icon n="listA" s={20} /></ToolChip>
              <ToolChip><Icon n="listB" s={20} /></ToolChip>
            </NavTools>
            <TreeList>
              {TOP_TREE.map((t) => (
                <TreeRow key={t}>
                  <Arrow />
                  {t}
                  {t === "装配式" && <RedDot />}
                </TreeRow>
              ))}
              <TreeRow>
                <Arrow $open />
                基础
              </TreeRow>
              {LEAVES.map(([icon, label]) => (
                <TreeRow key={label}>
                  <LeafBox $on={label.startsWith("条形")}>
                    <NavIcon n={icon} />
                    {label}
                  </LeafBox>
                </TreeRow>
              ))}
              <TreeRow><Arrow />其它</TreeRow>
              <TreeRow><Arrow />自定义</TreeRow>
            </TreeList>
            <ScrollThumb $top={309} $h={413} $x={3} />
          </NavBody>
        </Panel>

        <Panel $w={344}>
          <Strip><StripClose>✕</StripClose></Strip>
          <PanelTabs>
            <PanelTab $on>构件列表</PanelTab>
            <PanelTab>图纸管理</PanelTab>
          </PanelTabs>
          <ListBar>
            <BarBtn $w={84}><Icon n="fileNew" s={20} />新建 <TinyCaret $c="#999" /></BarBtn>
            <BarBtn $w={71}><Icon n="copy" s={19} />复制</BarBtn>
            <BarBtn $w={69}><Icon n="trash" s={17} />删除</BarBtn>
            <BarBtn $w={90}><Icon n="layerCopy" s={20} />层间复制</BarBtn>
            <More>▸▸</More>
          </ListBar>
          <SearchRow>
            搜索构件...
            <Icon n="search" s={14} />
          </SearchRow>
          <ListTree>
            <ComponentRow $pl={17}><Arrow $open />条形基础</ComponentRow>
            <ComponentRow $pl={42}><Arrow $open /><WideCode>TJ-1</WideCode></ComponentRow>
            <ComponentRow $pl={76}><PickedChip $on>(底)&nbsp;&nbsp;TJ-1-1</PickedChip></ComponentRow>
            <ComponentRow $pl={42}><Arrow $open /><WideCode>TJ-2</WideCode></ComponentRow>
            <ComponentRow $pl={76}><PickedChip>(底)&nbsp;&nbsp;TJ-2-1</PickedChip></ComponentRow>
          </ListTree>
          <Gap />
          <Strip />
          <PanelTabs>
            <PanelTab $on>属性列表</PanelTab>
            <PanelTab>图层管理</PanelTab>
          </PanelTabs>
          <PropBody>
            <PropRow>
              <HeadCell />
              <HeadCell>属性名称</HeadCell>
              <HeadCell $on>属性值</HeadCell>
              <HeadCell />
            </PropRow>
            {PROPS.map((p) => (
              <PropRow key={p.n}>
                <NumCell>{p.n}</NumCell>
                <Cell $c={p.nc}>{p.name}</Cell>
                <Cell $c={p.vc} $pad={5}>{p.val}</Cell>
                <CheckCell>{p.box && <Square />}</CheckCell>
              </PropRow>
            ))}
            <PropRow>
              <NumCell>15</NumCell>
              <Cell><Collapse>−</Collapse>钢筋业务属性</Cell>
              <Cell />
              <CheckCell />
            </PropRow>
            <PropRow>
              <NumCell>16</NumCell>
              <Cell $pad={0}><Branch />偏心条形...</Cell>
              <Cell $pad={5}>否</Cell>
              <CheckCell><Square /></CheckCell>
            </PropRow>
            <PropRow>
              <NumCell $sel>17</NumCell>
              <Cell $pad={0} $c={LINK}><Branch />其它钢筋</Cell>
              <EditBox>104,1<EllipsisBtn>...</EllipsisBtn></EditBox>
              <CheckCell />
            </PropRow>
            <PropRow>
              <NumCell>18</NumCell>
              <Cell $pad={0}><Branch />抗震等级</Cell>
              <Cell $pad={5}>(三级抗震)</Cell>
              <CheckCell><Square /></CheckCell>
            </PropRow>
            <PropRow>
              <NumCell />
              <Cell $pad={0}><Branch /></Cell>
              <Cell />
              <CheckCell />
            </PropRow>
            <ScrollThumb $top={26} $h={355} $x={5} />
          </PropBody>
        </Panel>

        <Canvas><CadDrawing /></Canvas>
      </Main>

      <Status>
        <StatusText $w={329} $wide>X = 191408 Y = 148662</StatusText>
        <StatusText $w={104}>层高：&nbsp;2</StatusText>
        <StatusText $w={166}>标高：&nbsp;-11.35~-9.35</StatusText>
        <StatusText $w={129}>0</StatusText>
        <StatusText $w={130}>隐藏：&nbsp;0</StatusText>
        <SnapBtn $w={29} $ml={0}><Icon n="ortho" s={20} /></SnapBtn>
        <SnapBtn $w={44} $ml={5} $on><Icon n="rectSnap" s={20} /><TinyCaret /></SnapBtn>
        <SnapBtn $w={29} $ml={9}><Icon n="cross" s={20} /></SnapBtn>
        <SnapBtn $w={42} $ml={10}><Icon n="angle" s={20} /><TinyCaret /></SnapBtn>
        <SnapBtn $w={44} $ml={6}><Icon n="plusBar" s={20} /><TinyCaret /></SnapBtn>
        <SnapBtn $w={30} $ml={5}><Icon n="device" s={20} /></SnapBtn>
        <SnapBtn $w={30} $ml={5}><Icon n="curve" s={20} /></SnapBtn>
        <StatusText $w={300} $ml={9}>在此处输入该构件的特殊设计的钢筋</StatusText>
      </Status>

      <Dialog>
        <DialogHead>
          编辑其它钢筋
          <CloseX viewBox="0 0 16 16" fill="none" stroke="#8a8a8a" strokeWidth="1.3">
            <path d="M2 2l12 12M14 2L2 14" />
          </CloseX>
        </DialogHead>
        <DialogCaption>其它钢筋列表：</DialogCaption>
        <DialogTable>
          <RebarRow $h={24}>
            <RebarHead />
            <RebarHead $on>筋号</RebarHead>
            <RebarHead>钢筋信息</RebarHead>
            <RebarHead>图号</RebarHead>
            <RebarHead>钢筋图形</RebarHead>
            <RebarHead>根数</RebarHead>
            <RebarHead>长度(mm)</RebarHead>
          </RebarRow>
          <RebarRow $h={66}>
            <RebarNum $on>1</RebarNum>
            <RebarCell $on>1</RebarCell>
            <RebarCell><Rebar />22</RebarCell>
            <RebarCell>104</RebarCell>
            <ShapeCell>
              <ShapeSvg width="251" height="65" viewBox="868 412 251 65">
                <path d="M919 425v22h114l27-27" fill="none" stroke="#000" strokeWidth="2" />
                <ShapeText x={901} y={441}>520</ShapeText>
                <ShapeText x={972} y={438}>1320</ShapeText>
                <ShapeText x={1102} y={443}>100</ShapeText>
                <ShapeText x={1047} y={471}>100</ShapeText>
                <path d="M1076 422h9M1080 422v29M1076 451h9M1034 450v10M1061 450v10M1034 455h27" fill="none" stroke="#000" strokeWidth="1.3" />
              </ShapeSvg>
            </ShapeCell>
            <RebarCell>1029</RebarCell>
            <RebarCell>1981</RebarCell>
          </RebarRow>
          <RebarRow $h={45}>
            <RebarNum>2</RebarNum>
            <RebarCell>2</RebarCell>
            <RebarCell><Rebar />14</RebarCell>
            <RebarCell>1</RebarCell>
            <ShapeCell>
              <ShapeSvg width="251" height="44" viewBox="868 478 251 44">
                <path d="M890 509.5h224" stroke="#000" strokeWidth="2" />
                <ShapeText x={1013} y={503} $s={12} $c="#ff0000">154445</ShapeText>
              </ShapeSvg>
            </ShapeCell>
            <RebarCell>3</RebarCell>
            <RebarCell>154445</RebarCell>
          </RebarRow>
          <RebarRow $h={45}>
            <RebarNum>3</RebarNum>
            <RebarCell />
            <RebarCell />
            <RebarCell />
            <RebarCell />
            <RebarCell />
            <RebarCell />
          </RebarRow>
        </DialogTable>
        <DialogFoot>
          <DlgButton>插入</DlgButton>
          <DlgButton>删除</DlgButton>
          <FootSpacer />
          <DlgButton $primary>确定</DlgButton>
          <DlgButton>取消</DlgButton>
        </DialogFoot>
        <Grip viewBox="0 0 11 11" fill="#9a9a9a">
          <rect x="8" y="0" width="2" height="2" />
          <rect x="4" y="4" width="2" height="2" />
          <rect x="8" y="4" width="2" height="2" />
          <rect x="0" y="8" width="2" height="2" />
          <rect x="4" y="8" width="2" height="2" />
          <rect x="8" y="8" width="2" height="2" />
        </Grip>
      </Dialog>

      <ArrowMark viewBox="1135 460 35 160">
        <polygon points="1153,465 1162,482 1156,481 1144,613 1147,481 1145,482" fill="#f4403c" />
      </ArrowMark>
    </Page>
  );
}
